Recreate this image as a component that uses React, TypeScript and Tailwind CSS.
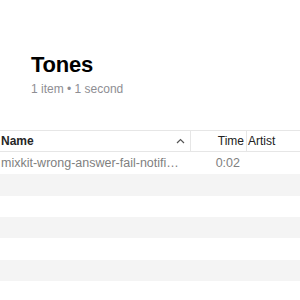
import React from "react";

const font = { fontFamily: '"Liberation Sans", Arial, sans-serif' };

export default function App() {
  const rows = [
    "h-[22px] bg-[#f4f4f4]",
    "h-[21px] bg-white",
    "h-[21px] bg-[#f4f4f4]",
    "h-[22px] bg-white",
    "h-[21px] bg-[#f4f4f4]",
    "h-[21px] bg-white",
  ];
  return (
    <div className="w-[300px] h-[300px] bg-white overflow-hidden" style={font}>
      <div className="pt-[52px] pl-[31px] h-[130px]">
        <div className="text-[22px] font-bold leading-[26px] text-black tracking-[-0.2px]">Tones</div>
        <div className="text-[12px] leading-[16px] text-[#8e8e93] mt-[3px]">1 item • 1 second</div>
      </div>
      <div className="flex h-[22px] border-y border-[#e6e6e6] text-[12px] font-bold text-[#262626]">
        <div className="w-[190px] flex items-center justify-between pl-[1px] pr-[5px]">
          <span>Name</span>
          <svg width="9" height="6" viewBox="0 0 9 6">
            <path d="M1 5 L4.5 1.5 L8 5" fill="none" stroke="#555" strokeWidth="1.2" />
          </svg>
        </div>
        <div className="w-[56px] border-l border-[#e6e6e6] flex items-center justify-end pr-[2px] font-normal text-[#222]">Time</div>
        <div className="flex-1 border-l border-[#e6e6e6] flex items-center pl-[1px] font-normal text-[#222]">Artist</div>
      </div>
      <div className="flex h-[22px] items-center text-[12.5px] text-[#808080]">
        <div className="w-[190px] pl-[1px] whitespace-nowrap">mixkit-wrong-answer-fail-notifi…</div>
        <div className="w-[56px] text-right pr-[6px]">0:02</div>
        <div className="flex-1" />
      </div>
      {rows.map((r, i) => (
        <div key={i} className={r} />
      ))}
    </div>
  );
}
